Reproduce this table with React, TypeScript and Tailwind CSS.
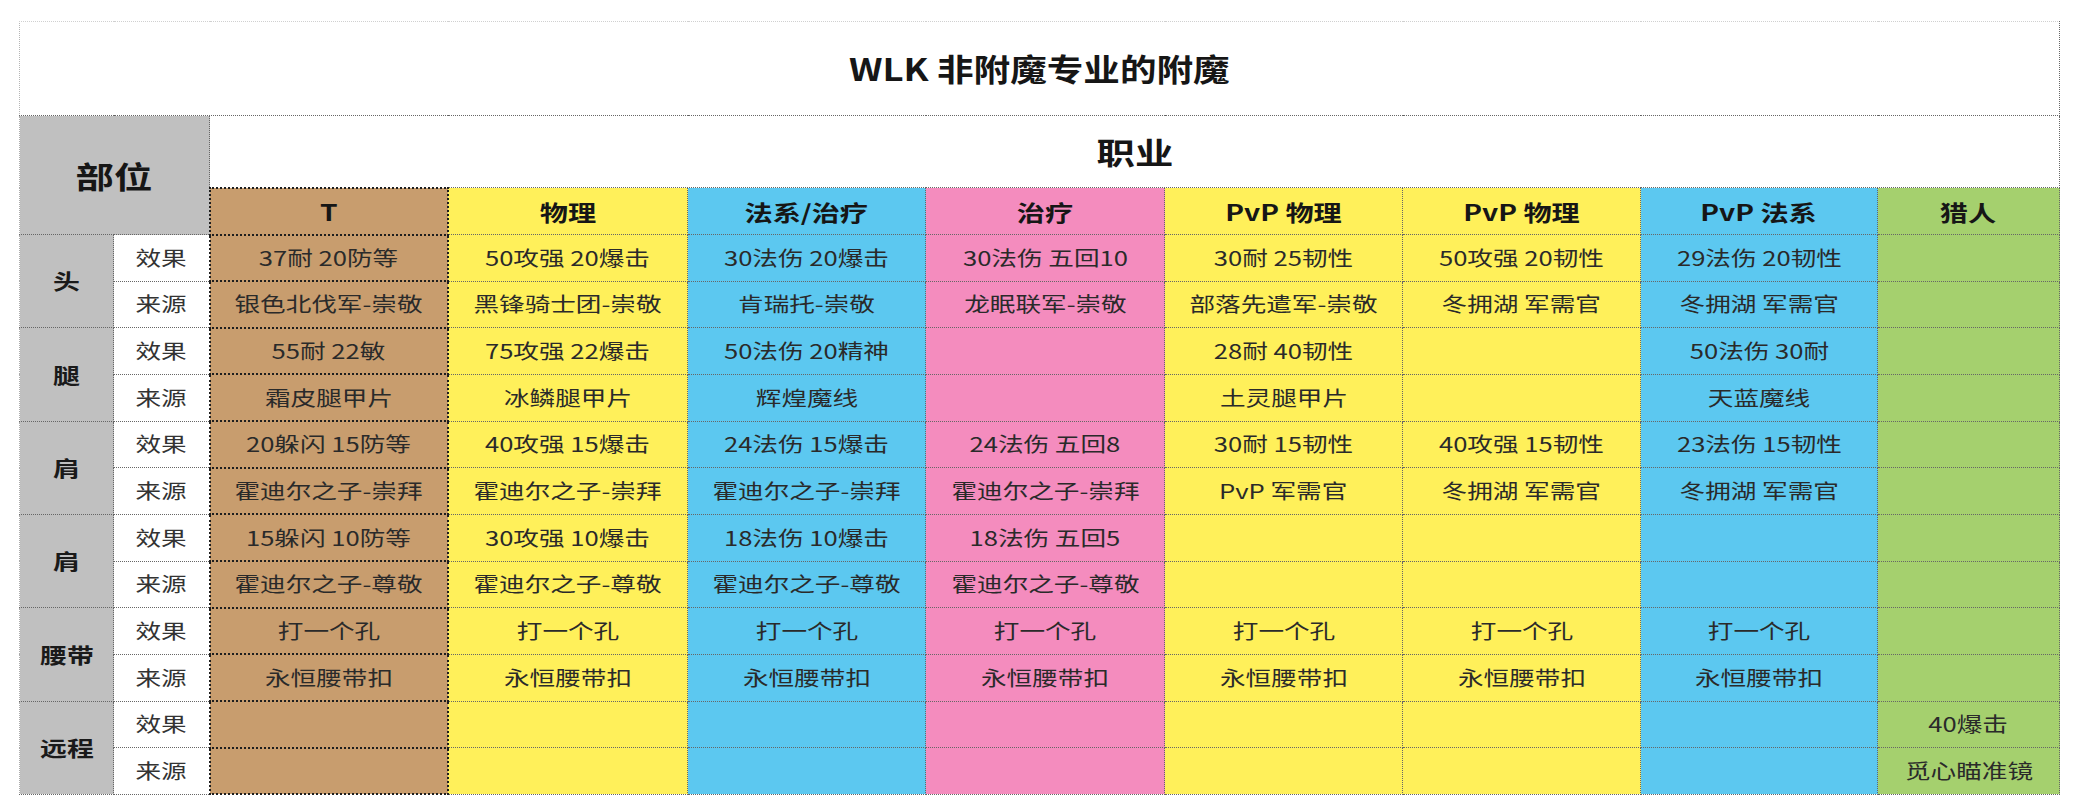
const FONT = '"Noto Sans CJK SC", "Noto Sans", sans-serif';

type Col = { name: string; bg: string; t?: boolean };

const cols: Col[] = [
  { name: "T", bg: "bg-[#c89d6e]", t: true },
  { name: "物理", bg: "bg-[#fff05a]" },
  { name: "法系/治疗", bg: "bg-[#5cc8f0]" },
  { name: "治疗", bg: "bg-[#f48cbe]" },
  { name: "PvP 物理", bg: "bg-[#fff05a]" },
  { name: "PvP 物理", bg: "bg-[#fff05a]" },
  { name: "PvP 法系", bg: "bg-[#5cc8f0]" },
  { name: "猎人", bg: "bg-[#a5d06e]" },
];

const widths = [94, 96, 238, 240, 238, 239, 238, 238, 237, 182];

const hodir1 = "霍迪尔之子-崇拜";
const hodir2 = "霍迪尔之子-尊敬";
const wg = "冬拥湖 军需官";
const hole = "打一个孔";
const buckle = "永恒腰带扣";

const parts: { part: string; effect: string[]; source: string[] }[] = [
  {
    part: "头",
    effect: ["37耐 20防等", "50攻强 20爆击", "30法伤 20爆击", "30法伤 五回10", "30耐 25韧性", "50攻强 20韧性", "29法伤 20韧性", ""],
    source: ["银色北伐军-崇敬", "黑锋骑士团-崇敬", "肯瑞托-崇敬", "龙眠联军-崇敬", "部落先遣军-崇敬", wg, wg, ""],
  },
  {
    part: "腿",
    effect: ["55耐 22敏", "75攻强 22爆击", "50法伤 20精神", "", "28耐 40韧性", "", "50法伤 30耐", ""],
    source: ["霜皮腿甲片", "冰鳞腿甲片", "辉煌魔线", "", "土灵腿甲片", "", "天蓝魔线", ""],
  },
  {
    part: "肩",
    effect: ["20躲闪 15防等", "40攻强 15爆击", "24法伤 15爆击", "24法伤 五回8", "30耐 15韧性", "40攻强 15韧性", "23法伤 15韧性", ""],
    source: [hodir1, hodir1, hodir1, hodir1, "PvP 军需官", wg, wg, ""],
  },
  {
    part: "肩",
    effect: ["15躲闪 10防等", "30攻强 10爆击", "18法伤 10爆击", "18法伤 五回5", "", "", "", ""],
    source: [hodir2, hodir2, hodir2, hodir2, "", "", "", ""],
  },
  {
    part: "腰带",
    effect: [hole, hole, hole, hole, hole, hole, hole, ""],
    source: [buckle, buckle, buckle, buckle, buckle, buckle, buckle, ""],
  },
  {
    part: "远程",
    effect: ["", "", "", "", "", "", "", "40爆击"],
    source: ["", "", "", "", "", "", "", "觅心瞄准镜"],
  },
];

function Wide({ children, className = "" }: { children: React.ReactNode; className?: string }) {
  return <span className={`inline-block whitespace-nowrap scale-x-[1.28] ${className}`}>{children}</span>;
}

const gridLine = "border border-dotted border-[#666]";
const tLine = "border-2 border-dotted border-[#1e1e1e]";

function DataRow({ part, label, values, first }: { part: string; label: string; values: string[]; first: boolean }) {
  return (
    <tr className="h-[46.67px]">
      {first && (
        <td rowSpan={2} className={`${gridLine} border-l-[#aaa] border-l-solid bg-[#c0c0c0] text-center`}>
          <Wide className="text-[21px] font-bold text-[#1a1a1a]">{part}</Wide>
        </td>
      )}
      <td className={`${gridLine} bg-white text-center`}>
        <Wide className="text-[20px] text-[#333]">{label}</Wide>
      </td>
      {values.map((v, i) => (
        <td key={i} className={`${cols[i].t ? tLine : gridLine} ${cols[i].bg} text-center`}>
          {v && <Wide className="text-[20px] text-[#2a2a2a]">{v}</Wide>}
        </td>
      ))}
    </tr>
  );
}

export default function App() {
  return (
    <div className="min-h-[800px] w-[2088px] bg-white pl-[19px] pt-[21px]" style={{ fontFamily: FONT }}>
      <table className="table-fixed border-collapse w-[2040px]">
        <colgroup>
          {widths.map((w, i) => (
            <col key={i} style={{ width: w }} />
          ))}
        </colgroup>
        <tbody>
          <tr className="h-[94px]">
            <td colSpan={10} className="border border-dotted border-[#666] border-t-[#d0d0d0] border-t-solid border-l-[#b5b5b5] border-l-solid bg-white text-center">
              <span className="inline-block whitespace-nowrap scale-x-[1.18] text-[31px] font-bold text-[#161616]">WLK 非附魔专业的附魔</span>
            </td>
          </tr>
          <tr className="h-[72px]">
            <td rowSpan={2} colSpan={2} className={`${gridLine} border-l-[#aaa] border-l-solid bg-[#c0c0c0] text-center`}>
              <Wide className="text-[30px] font-bold text-[#161616]">部位</Wide>
            </td>
            <td colSpan={8} className={`${gridLine} bg-white text-center`}>
              <Wide className="text-[30px] font-bold text-[#161616]">职业</Wide>
            </td>
          </tr>
          <tr className="h-[47px]">
            {cols.map((c, i) => (
              <td key={i} className={`${c.t ? tLine : gridLine} ${c.bg} text-center`}>
                <Wide className="text-[22px] font-bold text-[#161616]">{c.name}</Wide>
              </td>
            ))}
          </tr>
          {parts.map((p, idx) => [
            <DataRow key={`${idx}-e`} part={p.part} label="效果" values={p.effect} first={true} />,
            <DataRow key={`${idx}-s`} part={p.part} label="来源" values={p.source} first={false} />,
          ])}
        </tbody>
      </table>
    </div>
  );
}
